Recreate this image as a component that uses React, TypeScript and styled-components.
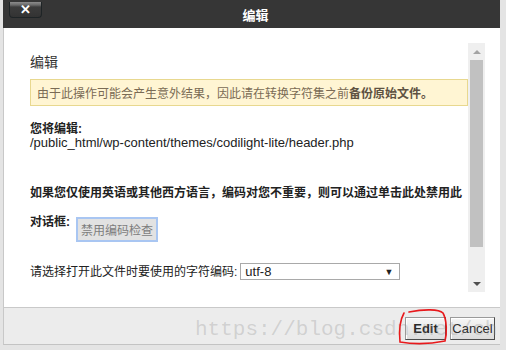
import styled, { createGlobalStyle } from "styled-components";

const GlobalStyle = createGlobalStyle`
  html, body {
    margin: 0;
    padding: 0;
    background: #e4e4e4;
  }
  body {
    font-family: "Liberation Sans", "Noto Sans CJK SC", Arial, sans-serif;
    color: #333;
  }
`;

const Page = styled.div`
  position: relative;
  width: 506px;
  height: 350px;
  overflow: hidden;
  background: #e4e4e4;
`;

const Dialog = styled.div`
  margin-left: 3px;
  width: 497px;
  height: 345px;
  display: flex;
  flex-direction: column;
  background: #fff;
  border-left: 1px solid #c8c8c8;
  border-bottom: 1px solid #c3c3c3;
  box-sizing: border-box;
`;

const Header = styled.div`
  position: relative;
  height: 28px;
  flex: none;
  display: flex;
  align-items: center;
  justify-content: center;
  background: #363636;
  margin-left: -1px;
`;

const CloseButton = styled.button`
  position: absolute;
  left: 6px;
  top: 2px;
  width: 33px;
  height: 16px;
  padding: 0;
  border: 1px solid #1e2426;
  border-top: none;
  border-radius: 0 0 4px 4px;
  background: linear-gradient(#8c8c8c 0, #6a6a6a 3px, #3c3c3c 5px, #333 100%);
  color: #fff;
  font: bold 13px/14px "Liberation Sans", sans-serif;
`;

const Title = styled.h1`
  margin: 0;
  font-size: 13px;
  font-weight: bold;
  color: #fff;
  font-family: "Noto Sans CJK SC", sans-serif;
  padding-left: 8px;
`;

const Body = styled.div`
  flex: 1;
  display: flex;
`;

const Content = styled.div`
  flex: 1;
  padding: 25px 0 0 26px;
  font-size: 12px;
`;

const Heading = styled.h2`
  margin: 0;
  font-size: 14px;
  line-height: 18px;
  font-weight: normal;
  color: #333;
`;

const Warning = styled.div`
  margin-top: 8px;
  height: 27px;
  box-sizing: border-box;
  border: 1px solid #e8d88f;
  background: #fff5d3;
  color: #7a6b55;
  padding: 0 6px;
  display: flex;
  align-items: center;
  font-size: 12px;

  b {
    color: #5e5242;
  }
`;

const Line = styled.div<{ $mt?: number; $bold?: boolean; $size?: number }>`
  margin-top: ${(p) => p.$mt ?? 0}px;
  font-size: ${(p) => p.$size ?? 12}px;
  line-height: 14px;
  font-weight: ${(p) => (p.$bold ? "bold" : "normal")};
  color: #222;
  white-space: nowrap;
`;

const Row = styled.div<{ $mt: number }>`
  margin-top: ${(p) => p.$mt}px;
  display: flex;
  align-items: flex-start;
`;

const RowLabel = styled.span<{ $bold?: boolean }>`
  font-size: 12px;
  line-height: 16px;
  font-weight: ${(p) => (p.$bold ? "bold" : "normal")};
  color: #222;
`;

const DisableButton = styled.button`
  margin: 4px 0 0 7px;
  height: 23px;
  width: 80px;
  padding: 0;
  box-sizing: border-box;
  border: 1px solid #8a8a8a;
  outline: 2px solid #a9c6f2;
  outline-offset: -1px;
  background: #e2e2e2;
  color: #7d7d7d;
  font: 12px/1 "Noto Sans CJK SC", sans-serif;
`;

const SelectRow = styled.div`
  margin-top: 22px;
  display: flex;
  align-items: center;
  gap: 3px;
`;

const SelectBox = styled.div`
  width: 160px;
  height: 17px;
  box-sizing: border-box;
  border: 1px solid #a9a9a9;
  background: #fff;
  display: flex;
  align-items: center;
  justify-content: space-between;
  padding: 0 6px 0 4px;
  font: 13px "Liberation Sans", sans-serif;
  color: #222;
`;

const Caret = styled.span`
  font-size: 9px;
  color: #222;
`;

const Scrollbar = styled.div`
  width: 17px;
  margin: 15px 15px 0 0;
  height: 249px;
  background: #efefef;
  display: flex;
  flex-direction: column;
  align-items: center;
`;

const Arrow = styled.div<{ $down?: boolean }>`
  height: 17px;
  width: 100%;
  display: flex;
  align-items: center;
  justify-content: center;

  &::before {
    content: "";
    border-left: 4px solid transparent;
    border-right: 4px solid transparent;
    ${(p) =>
      p.$down
        ? "border-top: 4px solid #505050;"
        : "border-bottom: 4px solid #a3a3a3;"}
  }
`;

const Thumb = styled.div`
  width: 13px;
  height: 187px;
  background: #c1c1c1;
`;

const Spacer = styled.div`
  flex: 1;
`;

const Footer = styled.div`
  height: 37px;
  flex: none;
  background: #ececec;
  border-top: 1px solid #c9c9c9;
  box-sizing: border-box;
  display: flex;
  justify-content: flex-end;
  align-items: flex-start;
  padding: 9px 5px 0 0;
  gap: 4px;
`;

const FooterButton = styled.button<{ $primary?: boolean }>`
  width: ${(p) => (p.$primary ? 41 : 45)}px;
  height: 23px;
  padding: 0;
  box-sizing: border-box;
  border: 1px solid #9a9a9a;
  border-right-color: #4a4a4a;
  border-bottom-color: #4a4a4a;
  box-shadow: inset 1px 1px 0 #fff;
  background: linear-gradient(#f6f6f6, #dcdcdc);
  color: #2a2a2a;
  font: ${(p) => (p.$primary ? "bold" : "normal")} 13px "Liberation Sans", sans-serif;
`;

const Watermark = styled.div`
  position: absolute;
  left: 195px;
  top: 318px;
  font: 21px/24px "Liberation Mono", monospace;
  color: rgba(140, 140, 140, 0.3);
  white-space: nowrap;
  pointer-events: none;
`;

const Annotation = styled.svg`
  position: absolute;
  left: 0;
  top: 0;
  pointer-events: none;
`;

export default function App() {
  return (
    <Page>
      <GlobalStyle />
      <Dialog>
        <Header>
          <CloseButton>✕</CloseButton>
          <Title>编辑</Title>
        </Header>
        <Body>
          <Content>
            <Heading>编辑</Heading>
            <Warning>
              <span>
                由于此操作可能会产生意外结果，因此请在转换字符集之前<b>备份原始文件。</b>
              </span>
            </Warning>
            <Line $mt={16} $bold>
              您将编辑:
            </Line>
            <Line $size={13}>/public_html/wp-content/themes/codilight-lite/header.php</Line>
            <Line $mt={36} $bold>
              如果您仅使用英语或其他西方语言，编码对您不重要，则可以通过单击此处禁用此
            </Line>
            <Row $mt={14}>
              <RowLabel $bold>对话框:</RowLabel>
              <DisableButton>禁用编码检查</DisableButton>
            </Row>
            <SelectRow>
              <RowLabel>请选择打开此文件时要使用的字符编码:</RowLabel>
              <SelectBox>
                <span>utf-8</span>
                <Caret>▼</Caret>
              </SelectBox>
            </SelectRow>
          </Content>
          <Scrollbar>
            <Arrow />
            <Thumb />
            <Spacer />
            <Arrow $down />
          </Scrollbar>
        </Body>
        <Footer>
          <FooterButton $primary>Edit</FooterButton>
          <FooterButton>Cancel</FooterButton>
        </Footer>
      </Dialog>
      <Watermark>https://blog.csdn.net/ch</Watermark>
      <Annotation width="506" height="350" viewBox="0 0 506 350">
        <path
          d="M409 312 C424 309 439 309 443 313 C447 320 447 334 445 341 C430 344 412 344 400 342 C399 332 400 320 404 313"
          fill="none"
          stroke="#e8191c"
          strokeWidth="1.6"
          strokeLinecap="round"
        />
      </Annotation>
    </Page>
  );
}
